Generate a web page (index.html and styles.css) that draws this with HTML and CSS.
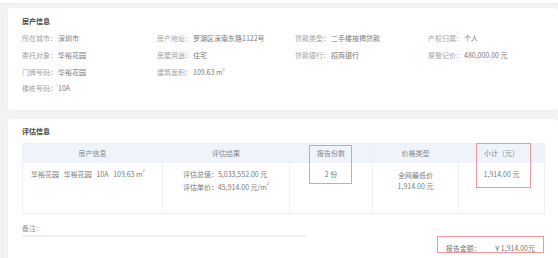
FILE: index.html
```html
<!DOCTYPE html>
<html lang="zh-CN">
<head>
<meta charset="utf-8">
<link rel="stylesheet" href="styles.css">
</head>
<body>
<div class="top-strip"></div>
<div class="page">
  <section class="card card-info">
    <h2 class="card-title">房产信息</h2>
    <div class="info-grid">
      <div class="field"><span class="label">所在城市：</span><span class="value">深圳市</span></div>
      <div class="field"><span class="label">房产地址：</span><span class="value">罗湖区深南东路1122号</span></div>
      <div class="field"><span class="label">贷款类型：</span><span class="value">二手楼按揭贷款</span></div>
      <div class="field"><span class="label">产权归属：</span><span class="value">个人</span></div>
      <div class="field"><span class="label">委托对象：</span><span class="value">华裕花园</span></div>
      <div class="field"><span class="label">房屋用途：</span><span class="value">住宅</span></div>
      <div class="field"><span class="label">贷款银行：</span><span class="value">招商银行</span></div>
      <div class="field"><span class="label">原登记价：</span><span class="value">480,000.00 元</span></div>
      <div class="field"><span class="label">门牌号码：</span><span class="value">华裕花园</span></div>
      <div class="field"><span class="label">建筑面积：</span><span class="value">109.63 m<sup>2</sup></span></div>
      <div class="field"></div>
      <div class="field"></div>
      <div class="field"><span class="label">楼栋号码：</span><span class="value">10A</span></div>
    </div>
  </section>

  <section class="card card-eval">
    <h2 class="card-title">评估信息</h2>
    <table class="eval-table">
      <colgroup>
        <col class="c1"><col class="c2"><col class="c3"><col class="c4"><col class="c5">
      </colgroup>
      <thead>
        <tr><th>房产信息</th><th>评估结果</th><th>报告份数</th><th>价格类型</th><th>小计（元）</th></tr>
      </thead>
      <tbody>
        <tr>
          <td class="td-left">华裕花园&nbsp;&nbsp;&nbsp;华裕花园&nbsp;&nbsp;&nbsp;10A&nbsp;&nbsp;&nbsp;109.63 m<sup>2</sup></td>
          <td><div class="result"><div>评估总值：5,033,552.00 元</div><div>评估单价：45,914.00 元/m<sup>2</sup></div></div></td>
          <td>2 份</td>
          <td class="td-tight"><div>全网最低价</div><div>1,914.00 元</div></td>
          <td>1,914.00 元</td>
        </tr>
      </tbody>
    </table>
    <div class="remark">备注：</div>
    <div class="total"><span class="total-label">报告金额：</span><span class="total-value">￥1,914.00元</span></div>

    <div class="mark mark-count"></div>
    <div class="mark mark-sub"></div>
    <div class="mark mark-total"></div>
  </section>
</div>
</body>
</html>
```

FILE: styles.css
```css
* { box-sizing: border-box; margin: 0; padding: 0; }

body {
  width: 558px;
  height: 258px;
  overflow: hidden;
  background: #f3f3f4;
  font-family: "Noto Sans CJK SC", "Noto Sans", sans-serif;
  font-size: 7px;
  color: #777;
}

.top-strip {
  height: 3px;
  background: #fff;
  box-shadow: 0 1px 1px rgba(0,0,0,0.03);
}

.page {
  padding: 5px 0 0 8px;
  display: flex;
  flex-direction: column;
  gap: 9px;
}

.card {
  background: #fff;
  border-radius: 3px;
  box-shadow: 0 0 2px rgba(0,0,0,0.06);
  padding: 9px 14px 0 14px;
  width: 550px;
}

.card-info { height: 102px; }

.card-title {
  font-size: 7px;
  line-height: 9px;
  font-weight: bold;
  color: #444;
}

.info-grid {
  margin-top: 4px;
  display: grid;
  grid-template-columns: 135px 138px 133px 1fr;
  grid-auto-rows: 16.67px;
  align-items: center;
}

.field { display: flex; align-items: center; white-space: nowrap; }
.label { width: 36px; color: #a3a3a3; }
.value { color: #7a7a7a; }
sup { font-size: 4px; vertical-align: top; line-height: 4px; }

.card-eval {
  position: relative;
  height: 150px;
  padding-top: 8px;
}

.eval-table {
  margin-top: 7px;
  width: 522px;
  border-collapse: collapse;
  table-layout: fixed;
  color: #7a7a7a;
}
.c1 { width: 140px; }
.c2 { width: 127px; }
.c3 { width: 83px; }
.c4 { width: 86px; }
.c5 { width: 86px; }

.eval-table th {
  height: 19px;
  background: #eff4fb;
  font-weight: normal;
  text-align: center;
  border: 1px solid #eef1f5;
  color: #888;
}
.eval-table td {
  height: 51px;
  vertical-align: top;
  text-align: center;
  padding-top: 5px;
  line-height: 13px;
  border: 1px solid #f0f0f0;
  white-space: nowrap;
}
.eval-table td.td-left { text-align: left; padding-left: 8px; }
.eval-table td.td-tight { line-height: 11px; padding-top: 7px; }
.result { display: inline-block; text-align: left; }

.remark {
  margin-top: 9px;
  width: 284px;
  line-height: 10px;
  padding-bottom: 2px;
  border-bottom: 2px solid #f0f0f0;
  color: #999;
}

.total {
  margin-top: 6px;
  display: flex;
  justify-content: flex-end;
  padding-right: 9px;
  line-height: 10px;
}
.total-label { width: 48px; }

.mark {
  position: absolute;
  border: 1px solid #f09a9c;
}
.mark-count { left: 301px; top: 26px; width: 43px; height: 39px; }
.mark-sub { left: 468px; top: 24px; width: 55px; height: 45px; }
.mark-total { left: 429px; top: 117px; width: 107px; height: 17px; }
```
